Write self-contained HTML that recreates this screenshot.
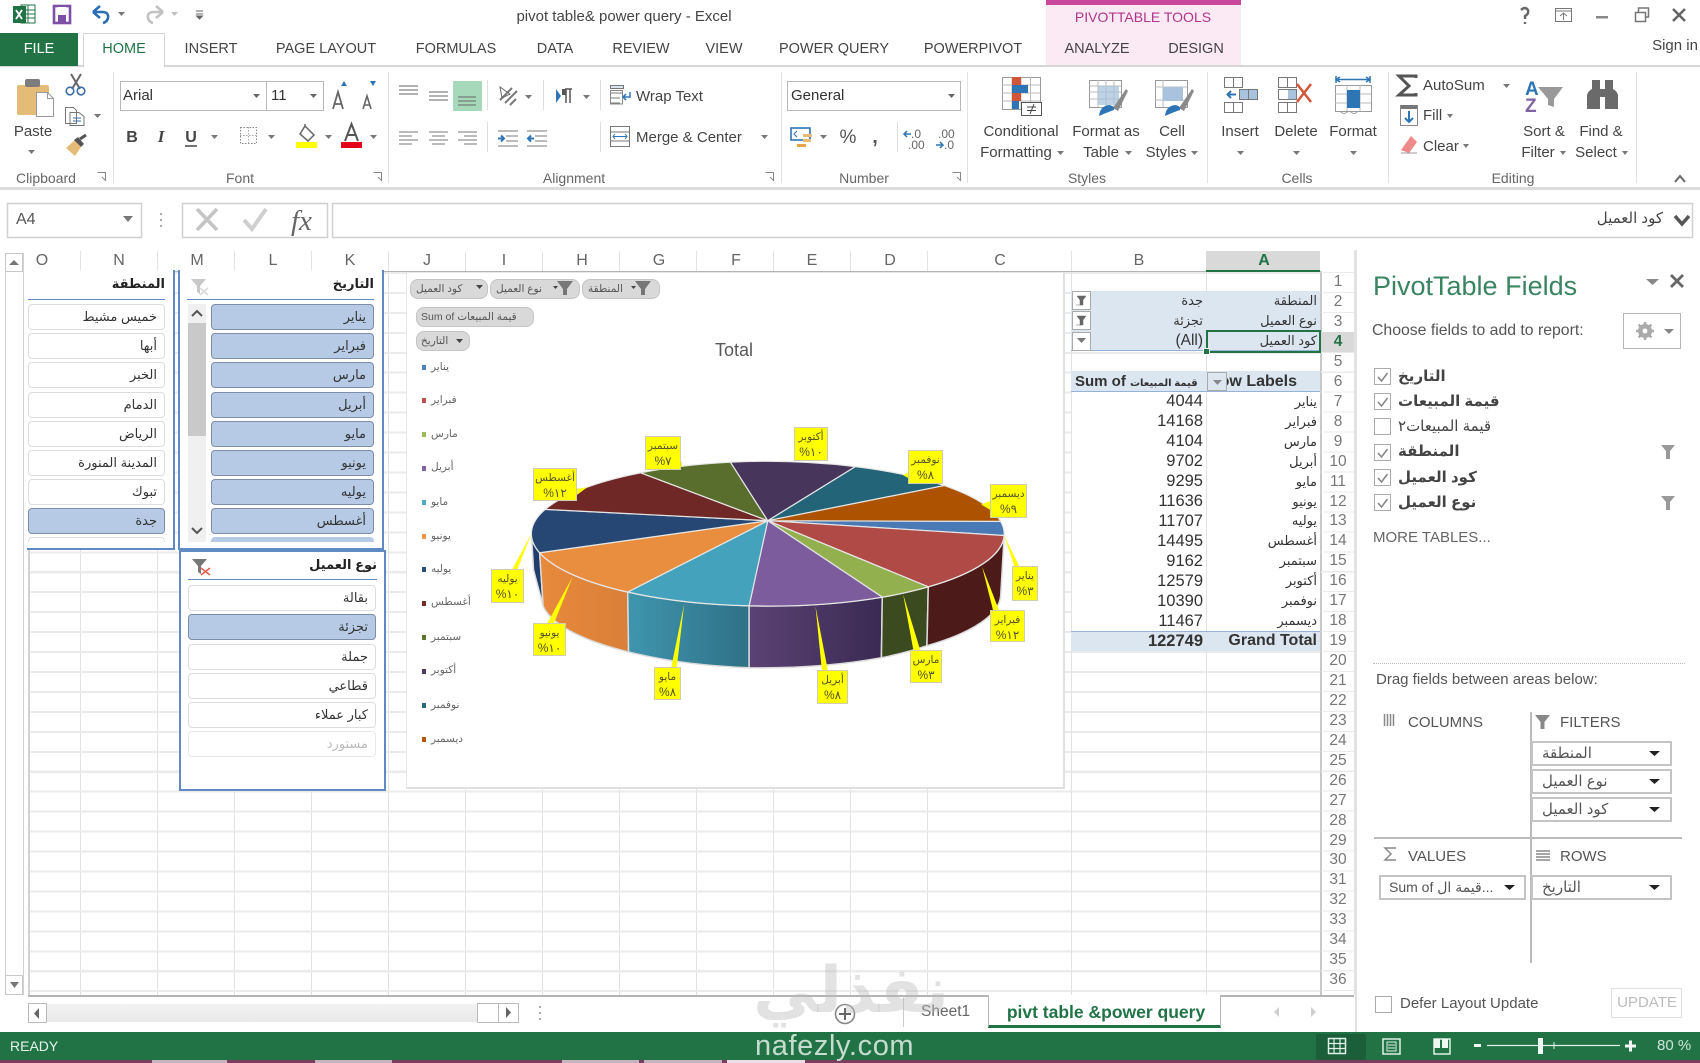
<!DOCTYPE html>
<html lang="en"><head><meta charset="utf-8"><title>pivot table& power query - Excel</title>
<style>
html,body{margin:0;padding:0;background:#fff}
#p{position:relative;width:1700px;height:1063px;overflow:hidden;background:#fff;font-family:"Liberation Sans","DejaVu Sans",sans-serif;color:#444}
.a{position:absolute;white-space:nowrap;line-height:20px}
.c{transform:translateX(-50%)}
.r{transform:translateX(-100%)}
.tab{top:39px;font-size:14.5px;color:#444}
.gl{top:168px;font-size:14px;color:#666}
.rb{font-size:15px;color:#444}
.b{position:absolute;box-sizing:border-box}
.h{top:251px;font-size:16px;color:#666}
.n{left:1338px;font-size:15.5px;color:#777;transform:translateX(-50%)}
.it{position:absolute;box-sizing:border-box;height:26px;border:1px solid #ddd;border-radius:4px;background:#fff;text-align:right;padding-right:7px;font-size:13px;line-height:23px;color:#333;white-space:nowrap}
.on{background:#b6cae6;border-color:#7d8ea8}
.sl{position:absolute;box-sizing:border-box;background:#fff;border:2px solid #5f8ac4}
.st{font-size:13px;font-weight:bold;color:#222}
.cb{position:absolute;box-sizing:border-box;background:#d9d9d9;border:1px solid #c4c4c4;border-radius:8px;font-size:10.5px;line-height:19px;color:#555;white-space:nowrap}
.lg{left:431px;font-size:10.5px;color:#666}
.lm{position:absolute;left:422px;width:4px;height:5px}
.y{position:absolute;box-sizing:border-box;background:#ffff00;border:1px solid #cfcfb0;text-align:center;font-size:10.5px;line-height:15px;color:#55552a;white-space:nowrap;padding-top:2px}
.y b{font-weight:normal;font-size:12px}
.v{left:1203px;font-size:16.5px;color:#333;transform:translateX(-100%)}
.l{left:1317px;font-size:13px;color:#333;transform:translateX(-100%)}
.f{left:1398px;font-size:15px;color:#444}
.fb{font-weight:bold}
.ck{position:absolute;box-sizing:border-box;left:1374px;width:17px;height:17px;border:1px solid #ababab;background:#fff}
.bx{position:absolute;box-sizing:border-box;height:25px;border:2px solid #c4c4c4;background:#fff;font-size:15px;line-height:21px;color:#555;padding-left:9px;white-space:nowrap}
.pt{font-size:15px;color:#555}
</style></head><body><div id="p">

<!-- tabs text -->
<div class="b" style="left:1046px;top:0;width:195px;height:66px;background:#fbe9f3"></div>
<div class="b" style="left:1046px;top:0;width:195px;height:5px;background:#c9479b"></div>
<div class="b" style="left:0;top:65px;width:1700px;height:2px;background:#d6d6d6"></div>
<div class="b" style="left:0;top:33px;width:78px;height:33px;background:#217346"></div>
<div class="b" style="left:83px;top:33px;width:82px;height:34px;background:#fff;border:1px solid #d4d4d4;border-bottom:0"></div>
<div class="a c" style="left:624px;top:7px;font-size:15px;color:#444">pivot table&amp; power query - Excel</div>
<div class="a c" style="left:1143px;top:7px;font-size:14px;color:#b2358c">PIVOTTABLE TOOLS</div>
<div class="a c tab" style="left:39px;color:#fff">FILE</div>
<div class="a c tab" style="left:124px;color:#217346">HOME</div>
<div class="a c tab" style="left:211px">INSERT</div>
<div class="a c tab" style="left:326px">PAGE LAYOUT</div>
<div class="a c tab" style="left:456px">FORMULAS</div>
<div class="a c tab" style="left:555px">DATA</div>
<div class="a c tab" style="left:641px">REVIEW</div>
<div class="a c tab" style="left:724px">VIEW</div>
<div class="a c tab" style="left:834px">POWER QUERY</div>
<div class="a c tab" style="left:973px">POWERPIVOT</div>
<div class="a c tab" style="left:1097px">ANALYZE</div>
<div class="a c tab" style="left:1196px">DESIGN</div>
<div class="a c" style="left:1675px;top:36px;font-size:15px;color:#444">Sign in</div>

<!-- ribbon separators -->
<div class="b" style="left:113px;top:72px;width:1px;height:111px;background:#e2e2e2"></div>
<div class="b" style="left:388px;top:72px;width:1px;height:111px;background:#e2e2e2"></div>
<div class="b" style="left:781px;top:72px;width:1px;height:111px;background:#e2e2e2"></div>
<div class="b" style="left:967px;top:72px;width:1px;height:111px;background:#e2e2e2"></div>
<div class="b" style="left:1207px;top:72px;width:1px;height:111px;background:#e2e2e2"></div>
<div class="b" style="left:1388px;top:72px;width:1px;height:111px;background:#e2e2e2"></div>
<div class="b" style="left:1636px;top:72px;width:1px;height:111px;background:#e2e2e2"></div>
<div class="b" style="left:0;top:187px;width:1700px;height:3px;background:#dcdcdc"></div>

<!-- boxes -->
<div class="b" style="left:120px;top:81px;width:147px;height:30px;border:1.5px solid #b8b8b8"></div>
<div class="b" style="left:266px;top:81px;width:58px;height:30px;border:1.5px solid #b8b8b8"></div>
<div class="b" style="left:787px;top:81px;width:174px;height:30px;border:1.5px solid #b8b8b8"></div>
<div class="b" style="left:453px;top:81px;width:29px;height:30px;background:#a6d8ba"></div>

<!-- ribbon text -->
<div class="a" style="left:123px;top:86px;font-size:15px;color:#333">Arial</div>
<div class="a" style="left:271px;top:86px;font-size:15px;color:#333">11</div>
<div class="a" style="left:791px;top:86px;font-size:15px;color:#333">General</div>
<div class="a c rb" style="left:33px;top:122px">Paste</div>
<div class="a rb" style="left:636px;top:87px">Wrap Text</div>
<div class="a rb" style="left:636px;top:128px">Merge &amp; Center</div>
<div class="a c rb" style="left:1021px;top:122px">Conditional</div>
<div class="a c rb" style="left:1016px;top:143px">Formatting</div>
<div class="a c rb" style="left:1106px;top:122px">Format as</div>
<div class="a c rb" style="left:1101px;top:143px">Table</div>
<div class="a c rb" style="left:1172px;top:122px">Cell</div>
<div class="a c rb" style="left:1166px;top:143px">Styles</div>
<div class="a c rb" style="left:1240px;top:122px">Insert</div>
<div class="a c rb" style="left:1296px;top:122px">Delete</div>
<div class="a c rb" style="left:1353px;top:122px">Format</div>
<div class="a rb" style="left:1423px;top:76px">AutoSum</div>
<div class="a rb" style="left:1423px;top:106px">Fill</div>
<div class="a rb" style="left:1423px;top:137px">Clear</div>
<div class="a c rb" style="left:1544px;top:122px">Sort &amp;</div>
<div class="a c rb" style="left:1538px;top:143px">Filter</div>
<div class="a c rb" style="left:1601px;top:122px">Find &amp;</div>
<div class="a c rb" style="left:1596px;top:143px">Select</div>
<div class="a c gl" style="left:46px">Clipboard</div>
<div class="a c gl" style="left:240px">Font</div>
<div class="a c gl" style="left:574px">Alignment</div>
<div class="a c gl" style="left:864px">Number</div>
<div class="a c gl" style="left:1087px">Styles</div>
<div class="a c gl" style="left:1297px">Cells</div>
<div class="a c gl" style="left:1513px">Editing</div>

<!-- ribbon icons -->
<svg class="b" style="left:0;top:0" width="1700" height="250" viewBox="0 0 1700 250" fill="none">
<rect x="21" y="5" width="14" height="18" fill="#fff" stroke="#217346"/><path d="M21 10h14M21 14h14M21 18h14M28 5v18" stroke="#217346"/>
<rect x="13" y="6" width="13" height="17" fill="#217346"/><path d="M16 10l6 9M22 10l-6 9" stroke="#fff" stroke-width="1.8"/>
<rect x="54" y="6" width="16" height="17" stroke="#7e4fa6" stroke-width="2.6"/><rect x="58" y="7" width="8" height="5" fill="#fff"/><rect x="58" y="15" width="8" height="7" fill="#7e4fa6"/>
<path d="M93 12l7-6M93 12l7 6M93 12h9q7 0 6 6q-1 4-5 5" stroke="#2b6db5" stroke-width="2.6"/>
<path d="M118 12h7l-3.500 4z" fill="#777"/>
<path d="M163 12l-7-6M163 12l-7 6M163 12h-9q-7 0-6 6q1 4 5 5" stroke="#c2c2c2" stroke-width="2.600"/>
<path d="M171 12h7l-3.500 4z" fill="#c2c2c2"/>
<path d="M196 11h7M196 14h7M196.500 16h6l-3 3z" stroke="#666" fill="#666"/>
<!-- window -->
<path d="M1521 10q4-4 7 0q1 4-3 6v3M1525 22v2" stroke="#666" stroke-width="2.400"/>
<rect x="1555.500" y="8.500" width="16" height="13" stroke="#777"/><path d="M1556 11h15M1563.500 20v-7M1560 16l3.500-3 3.500 3" stroke="#777"/>
<rect x="1596" y="16" width="12" height="2.500" fill="#888"/>
<path d="M1635.500 12.500h10v9h-10zM1638.500 12v-4h10v9h-3" stroke="#777" stroke-width="1.500"/>
<path d="M1673 9l12 12M1685 9l-12 12" stroke="#666" stroke-width="2.600"/>
<!-- clipboard -->
<rect x="17" y="85" width="32" height="30" rx="2" fill="#e5bc77"/><rect x="25" y="79" width="15" height="8" rx="2" fill="#7d7d7d"/><path d="M36.500 92.500h11l6 6v18h-17z" fill="#fff" stroke="#999"/><path d="M47.500 92.500v6h6" stroke="#999"/>
<path d="M28 150h7l-3.500 4z" fill="#777"/>
<path d="M71 74l9 15M81 74l-9 15" stroke="#666" stroke-width="2"/><circle cx="70" cy="91" r="3.800" stroke="#3c6ea8" stroke-width="1.600"/><circle cx="81" cy="91" r="3.800" stroke="#3c6ea8" stroke-width="1.600"/>
<path d="M65.500 107.500h8l3 3v13h-11zM70 112.500h9l5 4v9h-14z" stroke="#777" fill="#fff"/><path d="M73 118h8M73 121h8" stroke="#3c6ea8"/>
<path d="M94 114h7l-3.500 4z" fill="#777"/>
<path d="M66 148l9-8 6 7-6 9z" fill="#e5bc77"/><path d="M74 140l4-3 6 7-3 3z" fill="#555"/><path d="M80 139l6-4" stroke="#555" stroke-width="3"/>
<!-- font -->
<path d="M253 94h7l-3.500 4zM310 94h7l-3.500 4z" fill="#666"/>
<path d="M341 86h6l-3-5zM370 81h6l-3 5z" fill="#2e75b6"/>
<path d="M333 109l5-17 5 17M335 104h6" stroke="#666" stroke-width="1.800"/>
<path d="M363 109l4-13 4 13M364.500 105h5" stroke="#666" stroke-width="1.600"/>
<text x="132" y="142" text-anchor="middle" font-family="Liberation Sans" font-size="16" font-weight="bold" fill="#444">B</text>
<text x="161" y="142" text-anchor="middle" font-family="Liberation Serif" font-size="17" font-weight="bold" font-style="italic" fill="#444">I</text>
<text x="191" y="142" text-anchor="middle" font-family="Liberation Sans" font-size="16" font-weight="bold" fill="#444">U</text>
<path d="M185 146h12" stroke="#444" stroke-width="1.500"/>
<path d="M211 135h7l-3.500 4zM268 135h7l-3.500 4zM325 135h7l-3.500 4zM370 135h7l-3.500 4z" fill="#777"/>
<rect x="240.500" y="127.500" width="16" height="16" stroke="#888" stroke-dasharray="1.500 1.500"/><path d="M240 135.500h17M248.500 127v17" stroke="#aaa" stroke-dasharray="1.500 1.500"/>
<path d="M305 126l9 9-6 6-8-7zM305 126v-2" stroke="#666" stroke-width="1.500"/>
<rect x="296" y="142" width="21" height="6" fill="#ffff00"/>
<path d="M345 141l6.500-17 6.500 17M348 135h7" stroke="#555" stroke-width="2"/>
<rect x="341" y="142" width="21" height="6" fill="#e3001b"/>
<!-- align -->
<path d="M399 86h19M399 90h19M399 94h19M429 92h19M429 96h19M429 100h19M458 97h18M458 101h18M458 105h18" stroke="#666"/>
<path d="M399 132h19M399 136h13M399 140h19M399 144h13M429 132h19M432 136h13M429 140h19M432 144h13M458 132h19M464 136h13M458 140h19M464 144h13" stroke="#777"/>
<path d="M500 100l12-12M505 103l12-12M510 105l6-6" stroke="#777" stroke-width="2"/><path d="M500 87l10 7-8 4z" stroke="#666"/>
<path d="M525 95h7l-3.500 4zM583 95h7l-3.500 4zM761 135h7l-3.500 4z" fill="#777"/>
<path d="M487.500 80v30M543.500 80v30M600.500 80v30M487.500 122v30M600.500 122v30" stroke="#ddd"/>
<path d="M556 89v14l5-7z" fill="#2e75b6"/><path d="M565 89h7M566 89v14M570 89v14" stroke="#555" stroke-width="1.500"/><path d="M562 89h4v6h-4z" fill="#555"/>
<rect x="610.500" y="85.500" width="13" height="3" fill="#dbe5f1" stroke="#777"/><path d="M611 93h12M611 98h9M611 103h9" stroke="#777"/><rect x="610.500" y="90.500" width="12" height="13.500" stroke="#888"/><path d="M630 92v5h-7M626 94l-3 3 3 3" stroke="#2e75b6" stroke-width="1.500"/>
<path d="M498 131h20M506 136h12M506 141h12M498 146h20M508 131v0" stroke="#777"/><path d="M498 138.500h6M501 135.500l3 3-3 3" stroke="#2e75b6" stroke-width="2"/>
<path d="M527 131h20M535 136h12M535 141h12M527 146h20" stroke="#777"/><path d="M534 138.500h-6M531 135.500l-3 3 3 3" stroke="#2e75b6" stroke-width="2"/>
<rect x="610.500" y="126.500" width="19" height="20" stroke="#777"/><path d="M610 132h20M610 141h20" stroke="#777"/><path d="M613 136.500h14M615 134l-2 2.500 2 2.500M625 134l2 2.500-2 2.500" stroke="#2e75b6"/>
<path d="M948 94h7l-3.500 4z" fill="#666"/>
<!-- number -->
<rect x="791" y="128" width="19" height="12" fill="#fff" stroke="#2e75b6" stroke-width="1.600"/><path d="M797 131l-3 3 3 3" stroke="#2e75b6"/><rect x="803" y="134" width="9" height="3" fill="#e5bc77"/><rect x="803" y="139" width="8" height="3" fill="#e5bc77"/><rect x="797" y="144" width="9" height="3" fill="#e5a34a"/>
<path d="M820 135h7l-3.500 4z" fill="#777"/>
<text x="848" y="143" text-anchor="middle" font-family="Liberation Sans" font-size="19" fill="#555">%</text>
<text x="875" y="143" text-anchor="middle" font-family="Liberation Sans" font-size="20" font-weight="bold" fill="#555">,</text>
<path d="M897.500 122v30" stroke="#ddd"/>
<text x="911" y="138" font-family="Liberation Sans" font-size="12" fill="#666">.0</text><text x="908" y="149" font-family="Liberation Sans" font-size="12" fill="#666">.00</text>
<path d="M904 134h7M907 131l-3 3 3 3" stroke="#2e75b6" stroke-width="1.500"/>
<text x="938" y="138" font-family="Liberation Sans" font-size="12" fill="#666">.00</text><text x="944" y="149" font-family="Liberation Sans" font-size="12" fill="#666">.0</text>
<path d="M936 145h7M940 142l3 3-3 3" stroke="#2e75b6" stroke-width="1.500"/>
<!-- conditional -->
<rect x="1002.500" y="77.500" width="38" height="32" fill="#fff" stroke="#999"/><path d="M1012 77v32M1021 77v32M1030.500 77v32M1002 85h38M1002 93h38M1002 101h38" stroke="#bbb"/>
<rect x="1012" y="77" width="9" height="8" fill="#d2553a"/><rect x="1012" y="85" width="16" height="8" fill="#2e75b6"/><rect x="1012" y="93" width="9" height="8" fill="#d2553a"/><rect x="1012" y="101" width="7" height="8" fill="#2e75b6"/>
<rect x="1021.500" y="102.500" width="20" height="13" fill="#fff" stroke="#555"/><path d="M1027 107h9M1027 110.500h9M1034 104l-4 10" stroke="#444"/>
<!-- format as table -->
<rect x="1089.500" y="80.500" width="32" height="27" fill="#fff" stroke="#999"/><path d="M1089 86h32M1098 80v27M1106 80v27M1114 80v27M1089 92h32M1089 99h32" stroke="#bbb"/><rect x="1098" y="86" width="21" height="19" fill="#a9c3de" opacity=".75"/>
<path d="M1113 108l13-19 2 2-10 20z" fill="#8a8a8a"/><path d="M1099 116q1-10 10-11q6 1 5 5q-6 2-15 6z" fill="#2e75b6"/>
<rect x="1155.500" y="80.500" width="32" height="27" fill="#fff" stroke="#999"/><path d="M1155 87h32M1155 100h32M1163 80v27" stroke="#bbb"/><rect x="1163" y="87" width="20" height="14" fill="#a9c3de"/>
<path d="M1179 108l13-19 2 2-10 20z" fill="#8a8a8a"/><path d="M1165 116q1-10 10-11q6 1 5 5q-6 2-15 6z" fill="#2e75b6"/>
<!-- insert -->
<path d="M1224.500 77.500h18v10h-18zM1233.500 77v10M1239.500 89.500h18v10h-18zM1248.500 89v10M1224.500 102.500h18v10h-18zM1233.500 102v10" stroke="#777"/><rect x="1240" y="90" width="8" height="9" fill="#a9c3de"/><rect x="1249" y="90" width="8" height="9" fill="#a9c3de"/>
<path d="M1236 94.500h-8M1231 91l-3.500 3.500 3.500 3.500" stroke="#2e75b6" stroke-width="2"/>
<path d="M1278.500 77.500h18v10h-18zM1287.500 77v10M1278.500 89.500h18v10h-18zM1278.500 102.500h18v10h-18zM1287.500 102v10" stroke="#777"/><rect x="1288" y="90" width="8" height="9" fill="#a9c3de"/>
<path d="M1297 84l14 18M1311 84l-14 18" stroke="#d2553a" stroke-width="2.500"/>
<path d="M1336 79.500h34M1336 76v7M1370 76v7M1340 77l-4 2.500 4 2.500M1366 77l4 2.500-4 2.500" stroke="#2e75b6" stroke-width="1.500"/>
<rect x="1335.500" y="85.500" width="36" height="26" stroke="#999"/><path d="M1347 85v26M1360 85v26M1335 94h36M1335 103h36" stroke="#bbb"/><rect x="1347" y="90" width="13" height="18" fill="#2e75b6"/><path d="M1340 111q4 5 8 0M1350 111q4 5 8 0" stroke="#999"/>
<path d="M1057 151h7l-3.500 4zM1125 151h7l-3.500 4zM1191 151h7l-3.500 4zM1237 151h7l-3.500 4zM1293 151h7l-3.500 4zM1350 151h7l-3.500 4zM1503 84h7l-3.500 4zM1447 114h6l-3 4zM1463 144h6l-3 4zM1560 151h6l-3 4zM1622 151h6l-3 4z" fill="#777"/>
<!-- editing -->
<path d="M1416 78v-2h-17l10 10-10 9h17v-2" stroke="#555" stroke-width="3"/>
<rect x="1400.500" y="105.500" width="17" height="20" fill="#fff" stroke="#888"/><rect x="1401" y="105" width="16" height="4" fill="#777"/><path d="M1409 111v11M1405 118l4 4 4-4" stroke="#2e75b6" stroke-width="2"/>
<path d="M1401 150l10-14 6 6-8 11z" fill="#ef8a8a"/><path d="M1401 153h16" stroke="#999"/>
<text x="1525" y="95" font-family="Liberation Sans" font-size="19" font-weight="bold" fill="#2e75b6">A</text><text x="1525" y="112" font-family="Liberation Sans" font-size="19" font-weight="bold" fill="#8064a2">Z</text>
<path d="M1538 87h25l-9 12v8l-6-2v-6z" fill="#999"/>
<path d="M1584 95q1-4 5-6v-9h8v9h5v-9h8v9q4 2 5 6v14h-13v-12h-5v12h-13z" fill="#6a6a6a" transform="translate(3 0)"/>
<!-- launchers -->
<path d="M97.500 172.500h8v8M102 177l4 4M373.500 172.500h8v8M378 177l4 4M765.500 172.500h8v8M770 177l4 4M952.500 172.500h8v8M957 177l4 4" stroke="#888"/>
<path d="M1675 182l5-6 5 6" stroke="#666" stroke-width="2"/>
<!-- formula bar -->
<rect x="7.500" y="203.500" width="134" height="34" fill="#fff" stroke="#d0d0d0" stroke-width="1.500"/>
<rect x="182.500" y="203.500" width="145" height="34" fill="#fff" stroke="#d0d0d0" stroke-width="1.500"/>
<rect x="332.500" y="203.500" width="1360" height="34" fill="#fff" stroke="#d0d0d0" stroke-width="1.500"/>
<path d="M123 216h10l-5 6z" fill="#777"/>
<path d="M161 213v2M161 219v2M161 225v2" stroke="#aaa" stroke-width="2"/>
<path d="M197 209l20 21M217 209l-20 21" stroke="#c4c4c4" stroke-width="3.500"/>
<path d="M244 220l8 9 14-20" stroke="#cfcfcf" stroke-width="4"/>
<text x="291" y="230" font-family="Liberation Serif" font-size="29" font-style="italic" fill="#666">fx</text>
<path d="M1675 216l7 8 7-8" stroke="#555" stroke-width="3.500"/>
<path d="M1324 254l13 15h-13z" fill="#e2e2e2"/>
</svg>
<div class="a" style="left:16px;top:210px;font-size:16px;color:#555">A4</div>
<div class="a r" style="left:1663px;top:209px;font-size:15px;color:#444" dir="rtl">كود العميل</div>

<!-- sheet -->
<div class="b" style="left:5px;top:253px;width:19px;height:742px;border:1.500px solid #d0d0d0;border-width:0 1.500px"></div>
<div class="b" style="left:5px;top:253px;width:18px;height:19px;border:1.500px solid #c8c8c8"></div>
<div class="b" style="left:5px;top:975px;width:18px;height:20px;border:1.500px solid #c8c8c8;background:#fff"></div>
<svg class="b" style="left:5px;top:253px" width="20" height="745" fill="#777"><path d="M4 12h10l-5-5z"/><path d="M5 729h9l-4.500 6z"/></svg>

<div class="b" style="left:28px;top:272px;width:1292px;height:723px;background-image:repeating-linear-gradient(to bottom,#ebebeb 0,#ebebeb 2px,transparent 2px,transparent 19.950px),repeating-linear-gradient(to right,#e2e2e2 0,#e2e2e2 1px,transparent 1px,transparent 77px);background-size:100% 100%,900px 100%;background-repeat:no-repeat;background-position:0 0,52px 0"></div>
<div class="b" style="left:28px;top:272px;width:1.500px;height:723px;background:#d2d2d2"></div>
<div class="b" style="left:1071px;top:272px;width:1px;height:723px;background:#e2e2e2"></div>
<div class="b" style="left:1206px;top:272px;width:1px;height:723px;background:#e2e2e2"></div>
<div class="b" style="left:1320px;top:271px;width:1.500px;height:724px;background:#c8c8c8"></div>
<div class="b" style="left:1354px;top:250px;width:1px;height:745px;background:#e2e2e2"></div>
<div class="b" style="left:1321px;top:272px;width:33px;height:723px;background-image:repeating-linear-gradient(to bottom,#ebebeb 0,#ebebeb 1px,transparent 1px,transparent 19.950px)"></div>
<div class="b" style="left:28px;top:995px;width:960px;height:1.500px;background:#b4b4b4"></div>
<div class="b" style="left:1221px;top:995px;width:133px;height:1.500px;background:#b4b4b4"></div>

<!-- col headers -->
<div class="b" style="left:1206px;top:251px;width:114px;height:21px;background:#d9d9d9;border-bottom:2px solid #217346"></div>
<div class="b" style="left:28px;top:270.500px;width:1178px;height:1.500px;background:#b4b4b4"></div>
<div class="b" style="left:28px;top:251px;width:1326px;height:20px;background-image:repeating-linear-gradient(to right,#e2e2e2 0,#e2e2e2 1px,transparent 1px,transparent 77px);background-size:848px 100%;background-position:52px 0;background-repeat:no-repeat"></div>
<div class="b" style="left:927px;top:251px;width:1px;height:20px;background:#e2e2e2"></div>
<div class="b" style="left:1071px;top:251px;width:1px;height:20px;background:#e2e2e2"></div>
<div class="b" style="left:1354px;top:251px;width:1px;height:20px;background:#e2e2e2"></div>
<div class="a c h" style="left:42px">O</div><div class="a c h" style="left:119px">N</div><div class="a c h" style="left:197px">M</div><div class="a c h" style="left:273px">L</div><div class="a c h" style="left:350px">K</div><div class="a c h" style="left:427px">J</div><div class="a c h" style="left:504px">I</div><div class="a c h" style="left:582px">H</div><div class="a c h" style="left:659px">G</div><div class="a c h" style="left:736px">F</div><div class="a c h" style="left:812px">E</div><div class="a c h" style="left:890px">D</div><div class="a c h" style="left:1000px">C</div><div class="a c h" style="left:1139px">B</div><div class="a c h" style="left:1264px;color:#217346;font-weight:bold">A</div>

<!-- row numbers -->
<div class="b" style="left:1321px;top:332px;width:33px;height:20px;background:#d9d9d9"></div>
<div class="a n" style="top:272px">1</div><div class="a n" style="top:292px">2</div><div class="a n" style="top:312px">3</div><div class="a n" style="top:332px;color:#217346;font-weight:bold">4</div><div class="a n" style="top:352px">5</div><div class="a n" style="top:372px">6</div><div class="a n" style="top:392px">7</div><div class="a n" style="top:412px">8</div><div class="a n" style="top:432px">9</div><div class="a n" style="top:452px">10</div><div class="a n" style="top:472px">11</div><div class="a n" style="top:492px">12</div><div class="a n" style="top:511px">13</div><div class="a n" style="top:531px">14</div><div class="a n" style="top:551px">15</div><div class="a n" style="top:571px">16</div><div class="a n" style="top:591px">17</div><div class="a n" style="top:611px">18</div><div class="a n" style="top:631px">19</div><div class="a n" style="top:651px">20</div><div class="a n" style="top:671px">21</div><div class="a n" style="top:691px">22</div><div class="a n" style="top:711px">23</div><div class="a n" style="top:731px">24</div><div class="a n" style="top:751px">25</div><div class="a n" style="top:771px">26</div><div class="a n" style="top:791px">27</div><div class="a n" style="top:811px">28</div><div class="a n" style="top:831px">29</div><div class="a n" style="top:850px">30</div><div class="a n" style="top:870px">31</div><div class="a n" style="top:890px">32</div><div class="a n" style="top:910px">33</div><div class="a n" style="top:930px">34</div><div class="a n" style="top:950px">35</div><div class="a n" style="top:970px">36</div>

<!-- pivot table -->
<div class="b" style="left:1071px;top:291px;width:249px;height:60px;background:#dce6f1;border-bottom:1px solid #95b3d7"></div>
<div class="b" style="left:1072px;top:391px;width:248px;height:240px;background:#fff"></div>
<div class="b" style="left:1206px;top:391px;width:1px;height:240px;background:#e2e2e2"></div>
<div class="b" style="left:1071px;top:371px;width:249px;height:21px;background:#dce6f1;border-bottom:1px solid #95b3d7"></div>
<div class="b" style="left:1071px;top:631px;width:249px;height:20px;background:#dce6f1;border-top:1px solid #95b3d7"></div>
<div class="a l" style="top:291px" dir="rtl">المنطقة</div>
<div class="a l" style="top:311px" dir="rtl">نوع العميل</div>
<div class="a l" style="top:331px" dir="rtl">كود العميل</div>
<div class="a r" style="left:1203px;top:291px;font-size:13px;color:#333" dir="rtl">جدة</div>
<div class="a r" style="left:1203px;top:311px;font-size:13px;color:#333" dir="rtl">تجزئة</div>
<div class="a r" style="left:1203px;top:331px;font-size:15.500px;color:#333">(All)</div>
<div class="b" style="left:1206px;top:330px;width:115px;height:23px;border:2.500px solid #217346"></div>
<div class="b" style="left:1203px;top:348px;width:7px;height:7px;background:#217346;border:1px solid #fff"></div>
<div class="b" style="left:1072px;top:291px;width:19px;height:19px;background:#fff;border:1px solid #aaa"></div>
<div class="b" style="left:1072px;top:311px;width:19px;height:19px;background:#fff;border:1px solid #aaa"></div>
<div class="b" style="left:1072px;top:332px;width:19px;height:19px;background:#fff;border:1px solid #aaa"></div>
<svg class="b" style="left:1072px;top:291px" width="20" height="60"><path d="M5 5h9l-3 4v5h-3v-5z M4 14h5M4 34h5M5 25h9l-3 4v5h-3v-5z" fill="#666" stroke="#666" stroke-width=".5"/><path d="M5 47h9l-4.500 5z" fill="#777"/></svg>
<div class="a" style="left:1075px;top:372px;font-size:15px;font-weight:bold;color:#333">Sum of <span style="font-size:10px">قيمة المبيعات</span></div>
<div class="a r" style="left:1297px;top:372px;font-size:16px;font-weight:bold;color:#333">Row Labels</div>
<div class="b" style="left:1207px;top:372px;width:20px;height:19px;background:#dce6f1;border:1px solid #aaa"></div>
<svg class="b" style="left:1207px;top:372px" width="20" height="19"><path d="M6 8h9l-4.500 5z" fill="#888"/></svg>
<div class="a v" style="top:391px">4044</div><div class="a v" style="top:411px">14168</div><div class="a v" style="top:431px">4104</div><div class="a v" style="top:451px">9702</div><div class="a v" style="top:471px">9295</div><div class="a v" style="top:491px">11636</div><div class="a v" style="top:511px">11707</div><div class="a v" style="top:531px">14495</div><div class="a v" style="top:551px">9162</div><div class="a v" style="top:571px">12579</div><div class="a v" style="top:591px">10390</div><div class="a v" style="top:611px">11467</div>
<div class="a v" style="top:631px;font-weight:bold">122749</div>
<div class="a l" style="top:392px" dir="rtl">يناير</div><div class="a l" style="top:412px" dir="rtl">فبراير</div><div class="a l" style="top:432px" dir="rtl">مارس</div><div class="a l" style="top:452px" dir="rtl">أبريل</div><div class="a l" style="top:472px" dir="rtl">مايو</div><div class="a l" style="top:492px" dir="rtl">يونيو</div><div class="a l" style="top:511px" dir="rtl">يوليه</div><div class="a l" style="top:531px" dir="rtl">أغسطس</div><div class="a l" style="top:551px" dir="rtl">سبتمبر</div><div class="a l" style="top:571px" dir="rtl">أكتوبر</div><div class="a l" style="top:591px" dir="rtl">نوفمبر</div><div class="a l" style="top:611px" dir="rtl">ديسمبر</div>
<div class="a r" style="left:1317px;top:631px;font-size:16px;font-weight:bold;color:#333">Grand Total</div>

<!-- chart -->
<div class="b" style="left:406px;top:272px;width:659px;height:517px;background:#fff;border:1px solid #e8e8e8;border-right:2px solid #e0e0e0;border-bottom:2px solid #e0e0e0"></div>
<svg class="b" style="left:400px;top:260px" width="680" height="540">
<g transform="scale(.4337 .3444)" stroke-linejoin="round">
<defs>
<linearGradient id="s1" x1="0" x2="1" y1="0" y2="0"><stop offset="0" stop-color="#e88a3c"/><stop offset="1" stop-color="#d97f38"/></linearGradient>
<linearGradient id="s2" x1="0" x2="1" y1="0" y2="0"><stop offset="0" stop-color="#3f95ae"/><stop offset="1" stop-color="#2f7186"/></linearGradient>
<linearGradient id="s3" x1="0" x2="1" y1="0" y2="0"><stop offset="0" stop-color="#5b4274"/><stop offset="1" stop-color="#3a2a52"/></linearGradient>
</defs>
<g stroke="#dcdcdc" stroke-width="1.500">
<path vector-effect="non-scaling-stroke" d="M322 850A545 210 0 0 1 303 795L308 900L330 1005Z" fill="#1f3d6a"/>
<path vector-effect="non-scaling-stroke" d="M525 964A545 210 0 0 1 322 850L330 1005A537 205 0 0 0 527 1138Z" fill="url(#s1)"/>
<path vector-effect="non-scaling-stroke" d="M805 1004A545 210 0 0 1 525 964L527 1138A537 205 0 0 0 805 1184Z" fill="url(#s2)"/>
<path vector-effect="non-scaling-stroke" d="M1112 979A545 210 0 0 1 805 1004L805 1184A537 205 0 0 0 1110 1155Z" fill="url(#s3)"/>
<path vector-effect="non-scaling-stroke" d="M1218 949A545 210 0 0 1 1112 979L1110 1155A537 205 0 0 0 1215 1120Z" fill="#3c4a20"/>
<path vector-effect="non-scaling-stroke" d="M1393 800A545 210 0 0 1 1218 949L1215 1120A537 205 0 0 0 1385 975Z" fill="#4c1a18"/>
</g>
<g stroke="#e6e6e6" stroke-width="1.200">
<path vector-effect="non-scaling-stroke" d="M848 757L1385 759A545 210 0 0 1 1393 800Z" fill="#4a7ab5"/>
<path vector-effect="non-scaling-stroke" d="M848 757L1393 800A545 210 0 0 1 1218 949Z" fill="#b04a46"/>
<path vector-effect="non-scaling-stroke" d="M848 757L1218 949A545 210 0 0 1 1112 979Z" fill="#93b04f"/>
<path vector-effect="non-scaling-stroke" d="M848 757L1112 979A545 210 0 0 1 805 1004Z" fill="#7c5c9c"/>
<path vector-effect="non-scaling-stroke" d="M848 757L805 1004A545 210 0 0 1 525 964Z" fill="#44a2bc"/>
<path vector-effect="non-scaling-stroke" d="M848 757L525 964A545 210 0 0 1 322 850Z" fill="#e98d3e"/>
<path vector-effect="non-scaling-stroke" d="M848 757L322 850A545 210 0 0 1 335 724Z" fill="#264673"/>
<path vector-effect="non-scaling-stroke" d="M848 757L335 724A545 210 0 0 1 555 618Z" fill="#6f2826"/>
<path vector-effect="non-scaling-stroke" d="M848 757L555 618A545 210 0 0 1 762 587Z" fill="#596e2c"/>
<path vector-effect="non-scaling-stroke" d="M848 757L762 587A545 210 0 0 1 1050 600Z" fill="#47355c"/>
<path vector-effect="non-scaling-stroke" d="M848 757L1050 600A545 210 0 0 1 1255 655Z" fill="#246478"/>
<path vector-effect="non-scaling-stroke" d="M848 757L1255 655A545 210 0 0 1 1385 759Z" fill="#ad5300"/>
</g>
<g fill="#ffff00">
<path d="M1393 800L1418 895L1430 895Z"/>
<path d="M1342 890L1368 1020L1382 1020Z"/>
<path d="M1160 970L1184 1135L1200 1135Z"/>
<path d="M958 1005L973 1195L987 1195Z"/>
<path d="M655 1000L625 1185L638 1185Z"/>
<path d="M398 920L338 1058L354 1058Z"/>
<path d="M303 795L258 900L270 900Z"/>
<path d="M405 665L432 660L405 685Z"/>
<path d="M645 570L652 600L640 600Z"/>
<path d="M1175 615L1160 625L1175 635Z"/>
<path d="M1360 700L1340 710L1360 725Z"/>
</g>
</g></svg>
<div class="cb" style="left:410px;top:279px;width:78px;height:20px;padding-left:5px" dir="ltr"><span dir="rtl">كود العميل</span></div>
<div class="cb" style="left:490px;top:279px;width:90px;height:20px;padding-left:5px"><span dir="rtl">نوع العميل</span></div>
<div class="cb" style="left:582px;top:279px;width:78px;height:20px;padding-left:5px"><span dir="rtl">المنطقة</span></div>
<div class="cb" style="left:416px;top:307px;width:118px;height:20px;padding-left:4px">Sum of <span>قيمة المبيعات</span></div>
<div class="cb" style="left:416px;top:331px;width:54px;height:20px;padding-left:4px"><span dir="rtl">التاريخ</span></div>
<svg class="b" style="left:400px;top:270px" width="270" height="90"><path d="M76 15h7l-3.500 4zM153 16h5l-2.500 3zM231 16h5l-2.500 3zM56 69h7l-3.500 4z" fill="#444"/><path d="M157 11h16l-6 8v6h-4v-6zM235 11h16l-6 8v6h-4v-6z" fill="#777"/></svg>
<div class="a c" style="left:734px;top:340px;font-size:18px;color:#595959">Total</div>

<i class="lm" style="top:365px;background:#4f81bd"></i><div class="a lg" style="top:357px" dir="rtl">يناير</div>
<i class="lm" style="top:398px;background:#c0504d"></i><div class="a lg" style="top:390px" dir="rtl">فبراير</div>
<i class="lm" style="top:432px;background:#9bbb59"></i><div class="a lg" style="top:424px" dir="rtl">مارس</div>
<i class="lm" style="top:466px;background:#8064a2"></i><div class="a lg" style="top:457px" dir="rtl">أبريل</div>
<i class="lm" style="top:500px;background:#4bacc6"></i><div class="a lg" style="top:492px" dir="rtl">مايو</div>
<i class="lm" style="top:534px;background:#f79646"></i><div class="a lg" style="top:526px" dir="rtl">يونيو</div>
<i class="lm" style="top:567px;background:#2c4d75"></i><div class="a lg" style="top:559px" dir="rtl">يوليه</div>
<i class="lm" style="top:601px;background:#772c2a"></i><div class="a lg" style="top:592px" dir="rtl">أغسطس</div>
<i class="lm" style="top:635px;background:#5f7530"></i><div class="a lg" style="top:627px" dir="rtl">سبتمبر</div>
<i class="lm" style="top:669px;background:#4d3b62"></i><div class="a lg" style="top:660px" dir="rtl">أكتوبر</div>
<i class="lm" style="top:703px;background:#276a7c"></i><div class="a lg" style="top:695px" dir="rtl">نوفمبر</div>
<i class="lm" style="top:737px;background:#b65708"></i><div class="a lg" style="top:729px" dir="rtl">ديسمبر</div>

<div class="y" style="left:990px;top:484px;width:37px;height:34px">ديسمبر<br><b>%٩</b></div>
<div class="y" style="left:908px;top:450px;width:35px;height:34px">نوفمبر<br><b>%٨</b></div>
<div class="y" style="left:794px;top:427px;width:34px;height:34px">أكتوبر<br><b>%١٠</b></div>
<div class="y" style="left:645px;top:436px;width:36px;height:34px">سبتمبر<br><b>%٧</b></div>
<div class="y" style="left:533px;top:468px;width:44px;height:33px">أغسطس<br><b>%١٢</b></div>
<div class="y" style="left:491px;top:569px;width:33px;height:34px">يوليه<br><b>%١٠</b></div>
<div class="y" style="left:533px;top:623px;width:33px;height:33px">يونيو<br><b>%١٠</b></div>
<div class="y" style="left:654px;top:667px;width:27px;height:33px">مايو<br><b>%٨</b></div>
<div class="y" style="left:817px;top:670px;width:31px;height:34px">أبريل<br><b>%٨</b></div>
<div class="y" style="left:910px;top:650px;width:32px;height:33px">مارس<br><b>%٣</b></div>
<div class="y" style="left:990px;top:610px;width:35px;height:32px">فبراير<br><b>%١٢</b></div>
<div class="y" style="left:1012px;top:566px;width:26px;height:35px">يناير<br><b>%٣</b></div>

<!-- slicer N -->
<div class="sl" style="left:27px;top:270px;width:148px;height:280px;border-left:0;border-top:0"></div>
<div class="a r st" style="left:165px;top:274px" dir="rtl">المنطقة</div>
<div class="b" style="left:28px;top:298.500px;width:137px;height:1.500px;background:#5f8ac4"></div>
<div class="it" style="left:28px;top:304px;width:137px">خميس مشيط</div>
<div class="it" style="left:28px;top:333px;width:137px">أبها</div>
<div class="it" style="left:28px;top:362px;width:137px">الخبر</div>
<div class="it" style="left:28px;top:392px;width:137px">الدمام</div>
<div class="it" style="left:28px;top:421px;width:137px">الرياض</div>
<div class="it" style="left:28px;top:450px;width:137px">المدينة المنورة</div>
<div class="it" style="left:28px;top:479px;width:137px">تبوك</div>
<div class="it on" style="left:28px;top:508px;width:137px">جدة</div>
<div class="b" style="left:28px;top:537px;width:137px;height:5px;border:1px solid #ddd;border-bottom:0;border-radius:4px 4px 0 0"></div>

<!-- slicer date -->
<div class="sl" style="left:178px;top:270px;width:206px;height:280px;border-top:0"></div>
<div class="a r st" style="left:374px;top:274px" dir="rtl">التاريخ</div>
<div class="b" style="left:187px;top:298.500px;width:187px;height:1.500px;background:#5f8ac4"></div>
<div class="b" style="left:188px;top:304px;width:18px;height:238px;background:#f0f0f0"></div>
<div class="b" style="left:188px;top:323px;width:18px;height:113px;background:#c9c9c9"></div>
<svg class="b" style="left:188px;top:276px" width="24" height="266" fill="none"><path d="M3 3h15l-6 7v8l-3-2v-6z" fill="#c8c8c8"/><path d="M12 12l8 7M20 12l-8 7" stroke="#d8d8d8" stroke-width="1.500"/><path d="M4 40l5-5 5 5M4 252l5 5 5-5" stroke="#555" stroke-width="2"/></svg>
<div class="it on" style="left:211px;top:304px;width:163px">يناير</div>
<div class="it on" style="left:211px;top:333px;width:163px">فبراير</div>
<div class="it on" style="left:211px;top:362px;width:163px">مارس</div>
<div class="it on" style="left:211px;top:392px;width:163px">أبريل</div>
<div class="it on" style="left:211px;top:421px;width:163px">مايو</div>
<div class="it on" style="left:211px;top:450px;width:163px">يونيو</div>
<div class="it on" style="left:211px;top:479px;width:163px">يوليه</div>
<div class="it on" style="left:211px;top:508px;width:163px">أغسطس</div>
<div class="b" style="left:211px;top:537px;width:163px;height:5px;background:#b6cae6;border-radius:4px 4px 0 0"></div>

<!-- slicer type -->
<div class="sl" style="left:179px;top:550px;width:207px;height:241px"></div>
<div class="a r st" style="left:377px;top:555px" dir="rtl">نوع العميل</div>
<div class="b" style="left:188px;top:578.500px;width:189px;height:1.500px;background:#5f8ac4"></div>
<svg class="b" style="left:191px;top:558px" width="24" height="20" fill="none"><path d="M1 1h15l-6 7v8l-3-2v-6z" fill="#777"/><path d="M10 10l9 7M19 10l-9 7" stroke="#e2604d" stroke-width="1.600"/></svg>
<div class="it" style="left:188px;top:585px;width:188px">بقالة</div>
<div class="it on" style="left:188px;top:614px;width:188px">تجزئة</div>
<div class="it" style="left:188px;top:644px;width:188px">جملة</div>
<div class="it" style="left:188px;top:673px;width:188px">قطاعي</div>
<div class="it" style="left:188px;top:702px;width:188px">كبار عملاء</div>
<div class="it" style="left:188px;top:731px;width:188px;color:#bbb;border-color:#e8e8e8">مستورد</div>

<!-- sheet tabs strip -->
<div class="b" style="left:47px;top:1004px;width:430px;height:18px;background:linear-gradient(#f2f2f2,#e9e9e9)"></div>
<div class="b" style="left:28px;top:1003px;width:19px;height:20px;background:#fff;border:1px solid #bbb"></div>
<div class="b" style="left:477px;top:1003px;width:22px;height:20px;background:#fff;border:1px solid #bbb"></div>
<div class="b" style="left:498px;top:1003px;width:21px;height:20px;background:#fff;border:1px solid #bbb"></div>
<svg class="b" style="left:28px;top:996px" width="30" height="36" fill="#666"><path d="M11 12v11l-5-5.500z"/></svg>
<svg class="b" style="left:495px;top:1000px" width="30" height="26" fill="#666"><path d="M11 7v11l5-5.500z"/></svg>
<svg class="b" style="left:535px;top:1005px" width="10" height="20"><path d="M5 1v2M5 7v2M5 13v2" stroke="#aaa" stroke-width="2"/></svg>
<svg class="b" style="left:833px;top:1002px" width="24" height="24" fill="none"><circle cx="12" cy="12" r="9.500" stroke="#888" stroke-width="1.600"/><path d="M12 6v12M6 12h12" stroke="#666" stroke-width="2"/></svg>
<div class="b" style="left:903px;top:996px;width:1px;height:31px;background:#ccc"></div>
<div class="a" style="left:921px;top:1002px;font-size:15.500px;color:#666">Sheet1</div>
<div class="b" style="left:988px;top:995px;width:233px;height:33px;background:#fff;border:1px solid #bbb;border-top:0;border-bottom:3px solid #217346"></div>
<div class="a c" style="left:1106px;top:1002px;font-size:17.500px;font-weight:bold;color:#217346">pivt table &amp;power query</div>
<svg class="b" style="left:1270px;top:1005px" width="50" height="16" fill="#cfcfcf"><path d="M9 2v10l-5-5z"/><path d="M41 2v10l5-5z"/></svg>

<!-- pivot pane -->
<div class="b" style="left:1355px;top:250px;width:345px;height:782px;background:#fff;border-left:2px solid #e2e2e2"></div>
<div class="a" style="left:1373px;top:272px;font-size:27px;line-height:28px;color:#3a8460">PivotTable Fields</div>
<svg class="b" style="left:1640px;top:272px" width="50" height="20"><path d="M6 7h13l-6.500 6z" fill="#888"/><path d="M31 3l12 12M43 3l-12 12" stroke="#666" stroke-width="2.800"/></svg>
<div class="a pt" style="left:1372px;top:321px;font-size:15.800px">Choose fields to add to report:</div>
<div class="b" style="left:1623px;top:313px;width:58px;height:36px;border:1.500px solid #b5b5b5"></div>
<svg class="b" style="left:1634px;top:320px" width="44" height="22"><circle cx="11" cy="11" r="5" fill="none" stroke="#aaa" stroke-width="4"/><path d="M11 2v18M2 11h18M4.600 4.600l12.800 12.800M17.400 4.600L4.600 17.400" stroke="#aaa" stroke-width="2.500"/><circle cx="11" cy="11" r="2.500" fill="#fff"/><path d="M30 9h10l-5 5z" fill="#888"/></svg>
<div class="ck" style="top:368px"></div><div class="ck" style="top:393px"></div><div class="ck" style="top:418px"></div><div class="ck" style="top:444px"></div><div class="ck" style="top:469px"></div><div class="ck" style="top:494px"></div>
<svg class="b" style="left:1374px;top:368px" width="17" height="146" fill="none" stroke="#888" stroke-width="1.600"><path d="M4 9l3.500 4 6-8M4 34l3.500 4 6-8M4 85l3.500 4 6-8M4 110l3.500 4 6-8M4 135l3.500 4 6-8"/></svg>
<div class="a f fb" style="top:367px"><span dir="rtl">التاريخ</span></div>
<div class="a f fb" style="top:392px"><span dir="rtl">قيمة المبيعات</span></div>
<div class="a f" style="top:417px"><span dir="rtl">قيمة المبيعات٢</span></div>
<div class="a f fb" style="top:442px"><span dir="rtl">المنطقة</span></div>
<div class="a f fb" style="top:468px"><span dir="rtl">كود العميل</span></div>
<div class="a f fb" style="top:493px"><span dir="rtl">نوع العميل</span></div>
<svg class="b" style="left:1660px;top:444px" width="16" height="68" fill="#999"><path d="M1 1h14l-5 6v8h-4v-8zM1 52h14l-5 6v8h-4v-8z"/></svg>
<div class="a" style="left:1373px;top:528px;font-size:15px;color:#666">MORE TABLES...</div>
<div class="b" style="left:1373px;top:663px;width:312px;height:1px;border-top:1px dotted #bbb"></div>
<div class="a pt" style="left:1376px;top:670px">Drag fields between areas below:</div>
<div class="b" style="left:1530px;top:712px;width:1.500px;height:251px;background:#bbb"></div>
<div class="b" style="left:1374px;top:837px;width:308px;height:1.500px;background:#bbb"></div>
<svg class="b" style="left:1380px;top:712px" width="180" height="160"><path d="M4.500 2v12M7.500 2v12M10.500 2v12M13.500 2v12" stroke="#888" stroke-width="1.500"/><path d="M155 3h15l-5.500 7v7h-4v-7z" fill="#888"/><path d="M16 136H5l6 6-6 6h11" fill="none" stroke="#888" stroke-width="1.500"/><path d="M156 139h14M156 142h14M156 145h14M156 148h14" stroke="#888" stroke-width="1.500"/></svg>
<div class="a pt" style="left:1408px;top:713px">COLUMNS</div>
<div class="a pt" style="left:1560px;top:713px">FILTERS</div>
<div class="a pt" style="left:1408px;top:847px">VALUES</div>
<div class="a pt" style="left:1560px;top:847px">ROWS</div>
<div class="bx" style="left:1531px;top:741px;width:141px"><span dir="rtl">المنطقة</span></div>
<div class="bx" style="left:1531px;top:769px;width:141px"><span dir="rtl">نوع العميل</span></div>
<div class="bx" style="left:1531px;top:797px;width:141px"><span dir="rtl">كود العميل</span></div>
<div class="bx" style="left:1379px;top:875px;width:147px;font-size:14px;padding-left:8px">Sum of <span>قيمة ال...</span></div>
<div class="bx" style="left:1531px;top:875px;width:141px"><span dir="rtl">التاريخ</span></div>
<svg class="b" style="left:1500px;top:740px" width="170" height="160" fill="#222"><path d="M149 11h11l-5.500 5zM149 39h11l-5.500 5zM149 67h11l-5.500 5zM149 145h11l-5.500 5zM4 145h11l-5.500 5z"/></svg>
<div class="b" style="left:1375px;top:996px;width:17px;height:17px;border:1px solid #ababab"></div>
<div class="a pt" style="left:1400px;top:994px">Defer Layout Update</div>
<div class="b" style="left:1611px;top:988px;width:71px;height:30px;border:1.500px solid #e0e0e0;background:#fff"></div>
<div class="a c" style="left:1647px;top:993px;font-size:15px;color:#bcbcbc">UPDATE</div>

<!-- status -->
<div class="b" style="left:0;top:1032px;width:1700px;height:28px;background:#217346"></div>
<div class="b" style="left:0;top:1060px;width:1700px;height:3px;background:#7a3f5e"></div>
<div class="b" style="left:152px;top:1060px;width:75px;height:3px;background:#c4b4bc"></div>
<div class="b" style="left:315px;top:1060px;width:77px;height:3px;background:#c4b4bc"></div>
<div class="b" style="left:562px;top:1060px;width:77px;height:3px;background:#c4b4bc"></div>
<div class="b" style="left:644px;top:1060px;width:78px;height:3px;background:#c4b4bc"></div>
<div class="b" style="left:727px;top:1060px;width:78px;height:3px;background:#e8e0e4"></div>
<div class="a" style="left:10px;top:1036px;font-size:14px;color:#e8f2ec">READY</div>
<div class="b" style="left:1316px;top:1034px;width:50px;height:26px;background:#1b5e3a"></div>
<svg class="b" style="left:1300px;top:1032px" width="400" height="28" fill="none">
<rect x="28.500" y="6.500" width="17" height="15" stroke="#dff0e6" stroke-width="1.500"/><path d="M34 6v15M40 6v15M28 11.500h17M28 16.500h17" stroke="#dff0e6" stroke-width="1.200"/>
<rect x="83" y="7" width="17" height="15" stroke="#dff0e6" stroke-width="1.500"/><rect x="87" y="10" width="9" height="9" stroke="#dff0e6"/><path d="M88 13h7M88 16h7" stroke="#dff0e6"/>
<rect x="134" y="7" width="16" height="15" stroke="#dff0e6" stroke-width="1.500"/><rect x="134" y="7" width="6" height="9" fill="#eef7f2"/><rect x="142" y="7" width="6" height="9" fill="#eef7f2"/>
<path d="M174 13.500h7" stroke="#eef7f2" stroke-width="3"/><path d="M187 13.500h133" stroke="#dff0e6" stroke-width="1.300"/><rect x="238" y="6" width="5" height="16" fill="#f0f8f3"/><path d="M254 10v7" stroke="#dff0e6"/><path d="M325 14h11M330.500 8.500v11" stroke="#eef7f2" stroke-width="3"/>
</svg>
<div class="a" style="left:1657px;top:1036px;font-size:15px;color:#cfe5d8">80 %</div>

<!-- watermark -->
<div class="a" style="left:745px;top:950px;width:212px;text-align:center;font-size:64px;line-height:80px;font-weight:bold;color:rgba(185,185,185,.42)" dir="rtl">نفذلي</div>
<div class="a" style="left:755px;top:1031px;font-size:29px;line-height:30px;letter-spacing:.6px;color:#c6dcce">nafezly.com</div>

</div></body></html>
